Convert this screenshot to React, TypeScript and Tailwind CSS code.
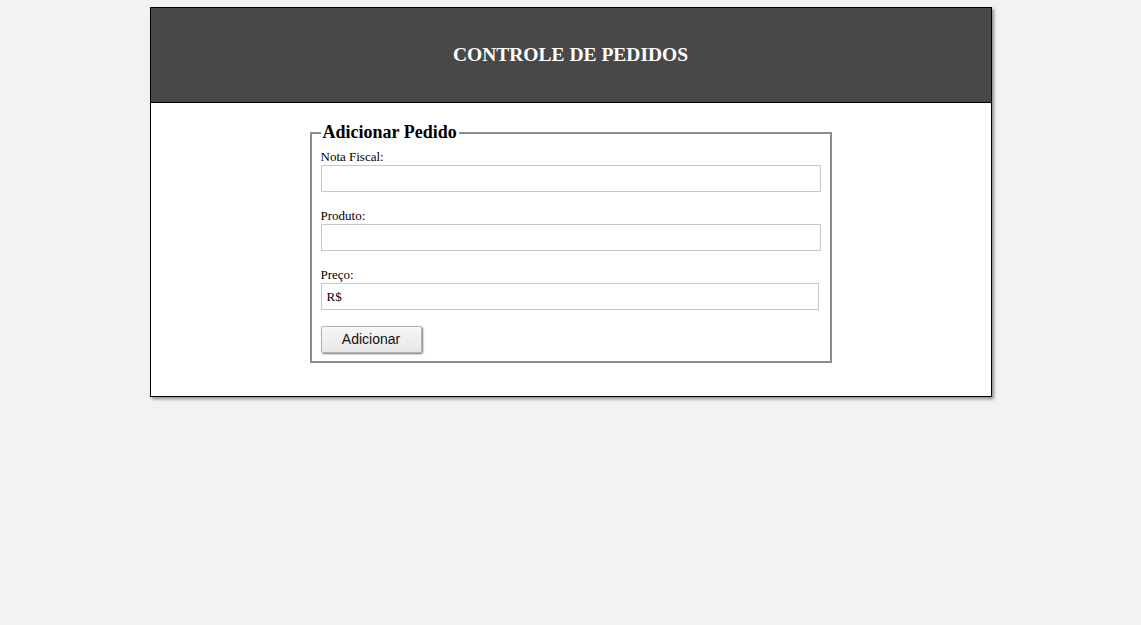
export default function App() {
  return (
    <div className="min-h-screen w-full bg-[#f2f2f2] pt-[7px] font-['Liberation_Serif',serif] text-black">
      <div className="mx-auto w-[842px] border border-black bg-white shadow-[2px_2px_3px_#8a8a8a]">
        <header className="flex h-[95px] items-center justify-center border-b border-black bg-[#484848]">
          <h1 className="text-[19.5px] font-bold text-white">CONTROLE DE PEDIDOS</h1>
        </header>

        <div className="pt-[19px] pb-[33px]">
          <fieldset className="mx-auto w-[521px] border-2 border-[#8c8c8c] px-[9px] pt-[6px] pb-[8px]">
            <legend className="px-[2px] text-[18px] font-bold leading-[21px]">Adicionar Pedido</legend>

            <label htmlFor="nota" className="block text-[13px] leading-[15px]">
              Nota Fiscal:
            </label>
            <input
              id="nota"
              type="text"
              className="mt-[1px] mb-[16px] block h-[27px] w-[500px] border border-[#c8c8c8] px-[5px] text-[13px] outline-none"
            />

            <label htmlFor="produto" className="block text-[13px] leading-[15px]">
              Produto:
            </label>
            <input
              id="produto"
              type="text"
              className="mt-[1px] mb-[16px] block h-[27px] w-[500px] border border-[#c8c8c8] px-[5px] text-[13px] outline-none"
            />

            <label htmlFor="preco" className="block text-[13px] leading-[15px]">
              Preço:
            </label>
            <input
              id="preco"
              type="text"
              defaultValue="R$"
              className="mt-[1px] mb-[16px] block h-[27px] w-[498px] border border-[#c8c8c8] px-[5px] text-[13px] outline-none"
            />

            <button
              type="button"
              className="block h-[27px] w-[101px] rounded-[2px] border border-[#b4b4b4] bg-gradient-to-b from-[#f6f6f6] to-[#e8e8e8] font-['Liberation_Sans',sans-serif] text-[14px] text-[#111] shadow-[1px_1px_2px_#777]"
            >
              Adicionar
            </button>
          </fieldset>
        </div>
      </div>
    </div>
  );
}
